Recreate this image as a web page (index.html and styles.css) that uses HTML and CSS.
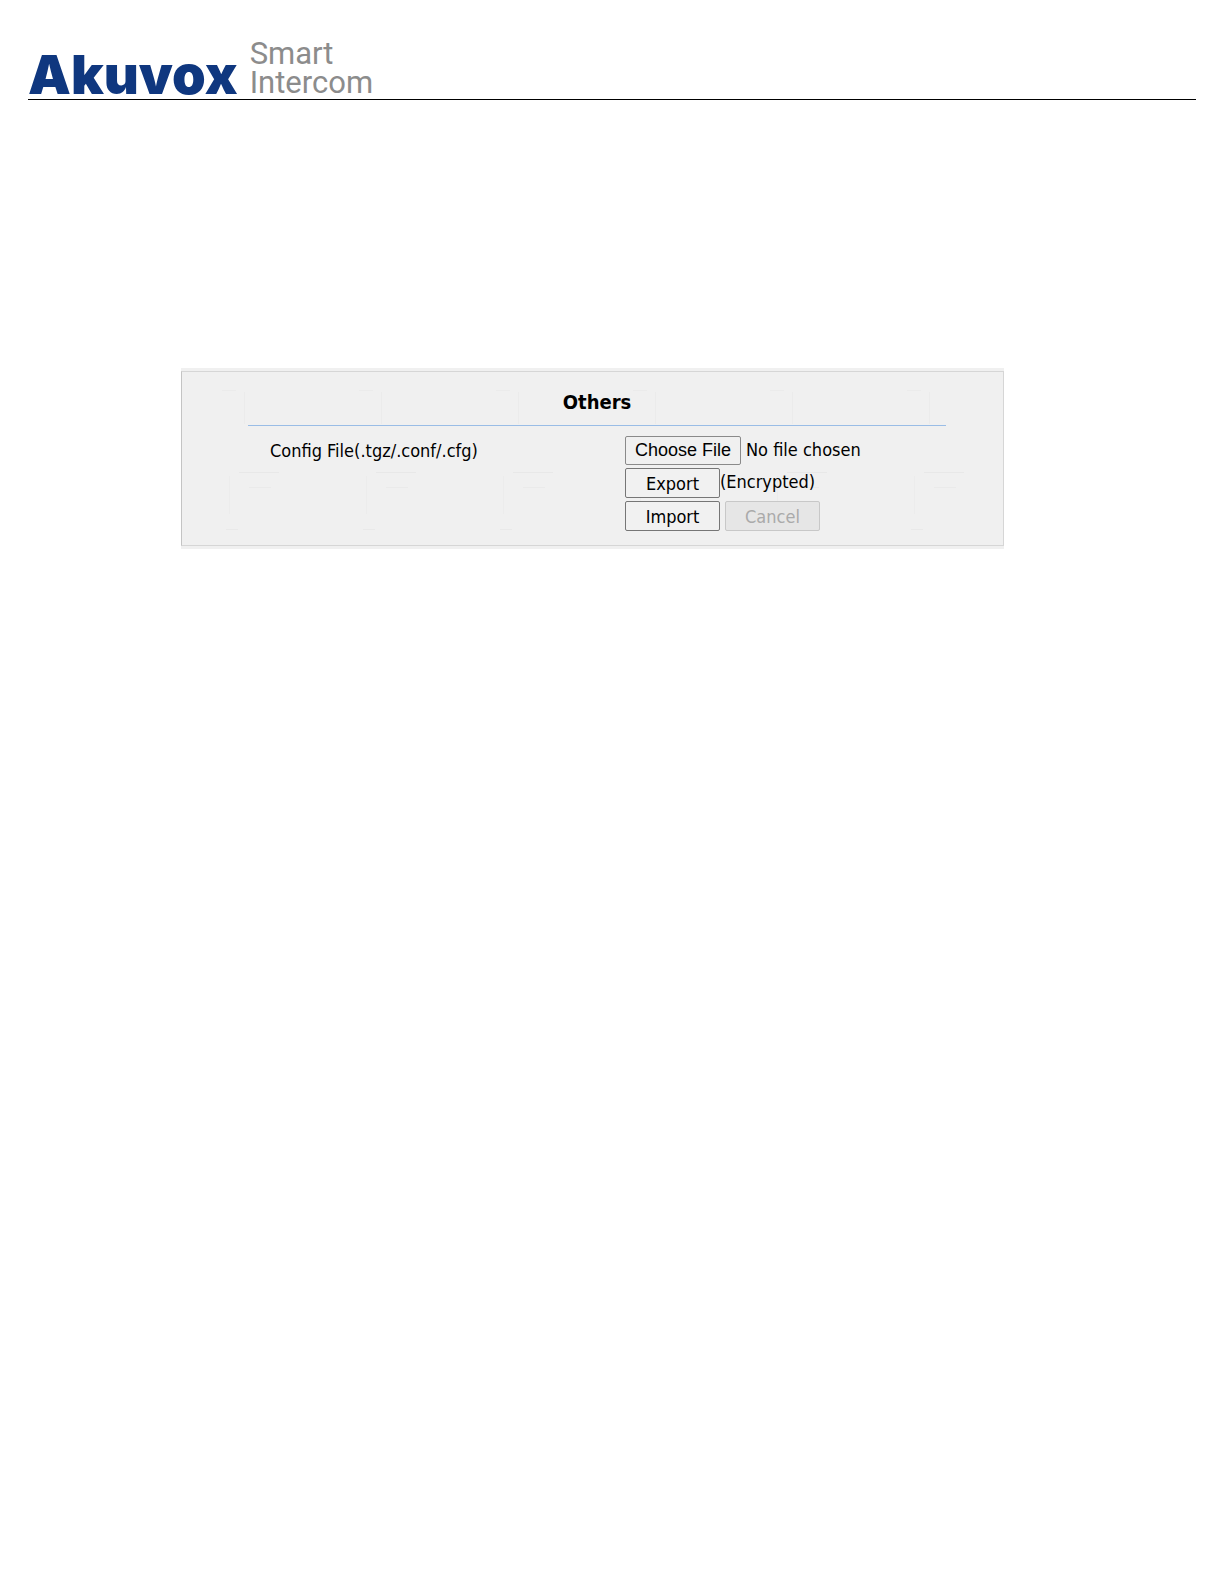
FILE: index.html
```html
<!DOCTYPE html>
<html lang="en">
<head>
    <meta charset="UTF-8">
    <meta name="viewport" content="width=device-width, initial-scale=1.0">
    <title>Akuvox Smart Intercom</title>
    <link rel="stylesheet" href="styles.css">
</head>
  <body>
    <header class="header">
      <span class="brand">Akuvox</span>
      <span class="tagline">
        <span>Smart</span>
        <span>Intercom</span>
      </span>
    </header>

    <main class="content">
      <form class="panel">
        <div class="panel-inner">
          <h2 class="title">Others</h2>

          <div class="fields">
            <label class="name" for="config">Config File(.tgz/.conf/.cfg)</label>

            <div class="controls">
              <input class="file" type="file" id="config" accept=".tgz,.conf,.cfg">
              <div class="row">
                <button class="btn" type="button">Export</button>
                <span class="note">(Encrypted)</span>
              </div>
              <div class="row spaced">
                <button class="btn" type="button">Import</button>
                <button class="btn" type="button" disabled>Cancel</button>
              </div>
            </div>
          </div>
        </div>
      </form>
    </main>
  </body>
</html>
```
FILE: styles.css
```css
* {
  margin: 0;
  padding: 0;
  box-sizing: border-box;
}

body {
  font-family: Tahoma, "DejaVu Sans Condensed", "DejaVu Sans", sans-serif;
  font-size: 18px;
  color: #000;
  background-color: #fff;
}

.header {
  display: flex;
  align-items: flex-end;
  gap: 12px;
  height: 100px;
  margin: 0 28px;
  border-bottom: 1px solid #000;
}

.brand {
  font-family: Inter, sans-serif;
  font-size: 54px;
  font-weight: 900;
  line-height: 48px;
  color: #0f377f;
}

.tagline {
  display: flex;
  flex-direction: column;
  font-family: Roboto, sans-serif;
  font-size: 31px;
  font-weight: 400;
  line-height: 29px;
  padding-bottom: 2px;
  color: #8c8c8c;
}

.content {
  padding: 268px 220px 0 181px;
}

.panel {
  padding: 3px 0;
  background-color: #f0f0f0;
}

/* faint woven texture */
.panel-inner {
  padding: 0 57px 14px 66px;
  border: 1px solid #d6d6d6;
  border-left: 1px solid #c4c4c4;
  background:
    linear-gradient(90deg, transparent 57px, #e8e8e8 57px 97px, transparent 97px) 0 100px / 137px 1px repeat-x,
    linear-gradient(90deg, transparent 67px, #eaeaea 67px 89px, transparent 89px) 0 115px / 137px 1px repeat-x,
    linear-gradient(90deg, transparent 44px, #e9e9e9 44px 56px, transparent 56px) 0 157px / 137px 1px repeat-x,
    linear-gradient(90deg, transparent 40px, #ebebeb 40px 54px, transparent 54px) 0 18px / 137px 1px repeat-x,
    linear-gradient(90deg, transparent 62px, #ebebeb 62px 63px, transparent 63px) 0 20px / 137px 32px repeat-x,
    linear-gradient(90deg, transparent 47px, #ececec 47px 48px, transparent 48px) 0 104px / 137px 38px repeat-x,
    #f0f0f0;
}

.title {
  padding: 18px 0 11px;
  font-size: 20px;
  line-height: 24px;
  text-align: center;
  border-bottom: 1px solid #9abde6;
}

.fields {
  display: grid;
  grid-template-columns: 355px 1fr;
  padding: 10px 0 0 22px;
}

.name {
  line-height: 29px;
}

.controls {
  display: flex;
  flex-direction: column;
  gap: 3px;
}

.row {
  display: flex;
}

.spaced {
  gap: 5px;
}

.file {
  height: 29px;
  font: inherit;
  line-height: 27px;
}

.file::file-selector-button {
  width: 116px;
  height: 29px;
  margin-right: 5px;
  font-family: Arial, "Liberation Sans", sans-serif;
  font-size: 18px;
  color: #000;
  background-color: #f0f0f0;
  border: 1px solid #8a8a8a;
  border-radius: 2px;
}

.btn {
  width: 95px;
  height: 30px;
  font-family: inherit;
  font-size: 18px;
  color: #000;
  background-color: #f1f1f1;
  border: 1px solid #767676;
  border-radius: 2px;
}

.btn:disabled {
  color: #aaa;
  background-color: #e6e6e6;
  border-color: #c8c8c8;
}

.note {
  line-height: 28px;
}
```
